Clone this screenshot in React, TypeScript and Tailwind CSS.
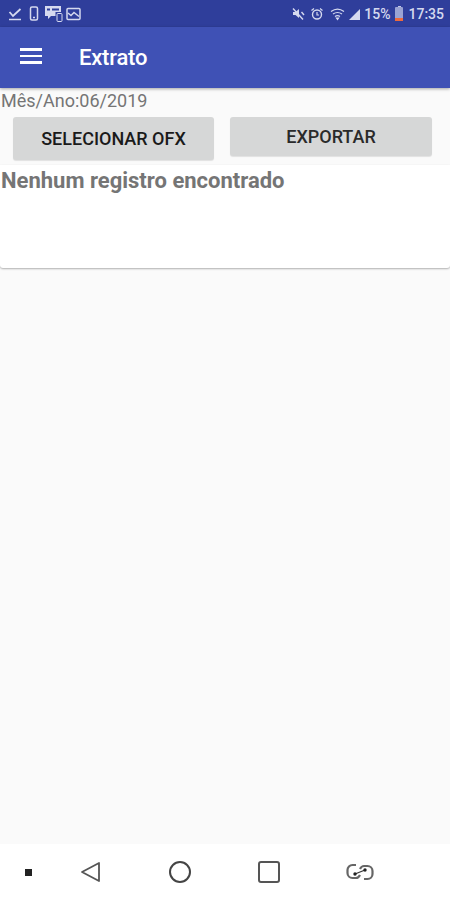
import React from 'react';

const font = "font-['Roboto',sans-serif]";

const StatusBar: React.FC = () => (
  <div className="h-[27px] bg-[#2f3e9b] flex items-center justify-between pl-[8px] pr-[6px] text-[#d5d9ef]">
    <div className="flex items-center">
      {/* check */}
      <svg width="14" height="16" viewBox="0 0 14 16" fill="none" stroke="currentColor" strokeWidth="1.8">
        <path d="M1.500 6l3.500 4 7.500-7" />
        <path d="M1 13.500h12" strokeWidth="1.500" />
      </svg>
      {/* phone */}
      <svg width="10" height="15" viewBox="0 0 10 15" fill="none" stroke="currentColor" strokeWidth="1.500" className="ml-[7px]">
        <rect x="1.500" y="1" width="7" height="13" rx="1.500" />
        <path d="M4 11.500h2" />
      </svg>
      {/* chat bubbles */}
      <svg width="20" height="18" viewBox="0 0 20 18" fill="currentColor" className="ml-[5px]">
        <path d="M1 1h16v10H7l-3 3v-3H1z" />
        <rect x="3" y="3.500" width="3" height="2" fill="#2f3e9b" />
        <rect x="8" y="3.500" width="7" height="2" fill="#2f3e9b" />
        <rect x="11.500" y="7" width="8" height="11" fill="#2f3e9b" />
        <rect x="13" y="8.500" width="5" height="8" rx="1" fill="none" stroke="currentColor" />
      </svg>
      {/* picture */}
      <svg width="15" height="14" viewBox="0 0 15 14" fill="none" stroke="currentColor" strokeWidth="1.500" className="ml-[2px]">
        <rect x="1" y="1.500" width="13" height="11" rx="1" />
        <path d="M2 6l3 2.500 3-3 5 4" />
      </svg>
    </div>
    <div className="flex items-center">
      {/* muted */}
      <svg width="14" height="14" viewBox="0 0 14 14" fill="none" stroke="currentColor" strokeWidth="1.400">
        <path d="M2 5h2.500L8 2v9L4.500 8H2z" fill="currentColor" stroke="none" />
        <path d="M2 1.500l10 11" />
        <path d="M10.500 5l2.500 3" />
      </svg>
      {/* alarm */}
      <svg width="14" height="14" viewBox="0 0 14 14" fill="none" stroke="currentColor" strokeWidth="1.400" className="ml-[5px]">
        <circle cx="7" cy="7.500" r="4.500" />
        <path d="M7 5v3h2M1.500 3.500L4 1.500M12.500 3.500L10 1.500" strokeWidth="1.200" />
      </svg>
      {/* wifi */}
      <svg width="15" height="14" viewBox="0 0 15 14" fill="none" stroke="currentColor" strokeWidth="1.200" className="ml-[6px]">
        <path d="M1 4.500c4-3 9-3 13 0M3 7c3-2 6-2 9 0M5 9.500c1.500-1 3.500-1 5 0" />
        <path d="M7.500 12.500l-1-1.500h2z" fill="currentColor" />
      </svg>
      {/* signal */}
      <svg width="12" height="12" viewBox="0 0 12 12" fill="currentColor" className="ml-[3px]">
        <path d="M12 1v11H1z" />
      </svg>
      <span className={`${font} ml-[4px] text-[14px] font-medium leading-none`}>15%</span>
      {/* battery */}
      <div className="ml-[5px] w-[8px] h-[15px] flex flex-col items-center">
        <div className="w-[3px] h-[1px] bg-[#c3c8e6]" />
        <div className="w-[8px] h-[14px] bg-[#9aa3d3] flex flex-col justify-end rounded-[1px]">
          <div className="h-[3px] bg-[#ee6a3c]" />
        </div>
      </div>
      <span className={`${font} ml-[5px] text-[14px] font-medium leading-none`}>17:35</span>
    </div>
  </div>
);

const Toolbar: React.FC = () => (
  <div className="h-[61px] bg-[#3f51b5] flex items-center shadow-[0_1px_3px_rgba(0,0,0,0.35)] relative">
    <div className="ml-[20px] w-[22px] flex flex-col gap-[4px] mb-[3px]">
      <div className="h-[2.500px] bg-white" />
      <div className="h-[2.500px] bg-white" />
      <div className="h-[2.500px] bg-white" />
    </div>
    <span className={`${font} ml-[37px] text-[22px] font-medium text-white tracking-[-0.2px]`}>Extrato</span>
  </div>
);

const NavBar: React.FC = () => (
  <div className="h-[56px] bg-white flex items-center text-[#555]">
    <div className="ml-[25px] w-[7px] h-[7px] bg-[#222]" />
    <svg width="22" height="24" viewBox="0 0 22 24" fill="none" stroke="currentColor" strokeWidth="1.800" strokeLinejoin="round" className="ml-[48px]">
      <path d="M19 3v18L2 12z" />
    </svg>
    <div className="ml-[67px] w-[22px] h-[22px] rounded-full border-[2px] border-[#444]" />
    <div className="ml-[67px] w-[22px] h-[22px] rounded-[3px] border-[2px] border-[#555]" />
    <svg width="28" height="20" viewBox="0 0 28 20" fill="none" stroke="#666" strokeWidth="2.200" className="ml-[66px]">
      <path d="M10 3H6.500a5 5 0 0 0-5 5v3a5 5 0 0 0 5 5H10c2 0 3-1 4-3" />
      <path d="M18 17h3.500a5 5 0 0 0 5-5V9a5 5 0 0 0-5-5H18c-2 0-3 1-4 3" />
      <path d="M9 12L19 8" stroke="#333" strokeWidth="1.200" />
      <circle cx="9" cy="12" r="1.700" fill="#222" stroke="none" />
      <circle cx="19" cy="8" r="1.700" fill="#222" stroke="none" />
    </svg>
  </div>
);

const App: React.FC = () => {
  return (
    <div className={`${font} w-[450px] h-[900px] bg-[#fafafa] flex flex-col overflow-hidden`}>
      <StatusBar />
      <Toolbar />
      <div className="flex-1 flex flex-col">
        <div className="h-[77px] flex flex-col">
          <p className="pl-[1px] pt-[3px] text-[18px] leading-[20px] text-[#757575]">Mês/Ano:06/2019</p>
          <div className="flex items-start pl-[13px] mt-[6px]">
            <button className="w-[201px] h-[43px] bg-[#d6d7d7] rounded-[3px] text-[18px] font-medium text-[#1a1a1a] shadow-[0_1px_1px_rgba(0,0,0,0.1)]">
              SELECIONAR OFX
            </button>
            <button className="ml-[16px] w-[202px] h-[39px] bg-[#d6d7d7] rounded-[3px] text-[18px] font-medium text-[#2a2a2a] shadow-[0_1px_1px_rgba(0,0,0,0.1)]">
              EXPORTAR
            </button>
          </div>
        </div>
        <div className="h-[103px] bg-white rounded-b-[3px] shadow-[0_1px_2px_rgba(0,0,0,0.3)]">
          <p className="pl-[1px] pt-[4px] text-[22px] leading-[24px] font-bold text-[#757575]">Nenhum registro encontrado</p>
        </div>
      </div>
      <NavBar />
    </div>
  );
};

export default App;
